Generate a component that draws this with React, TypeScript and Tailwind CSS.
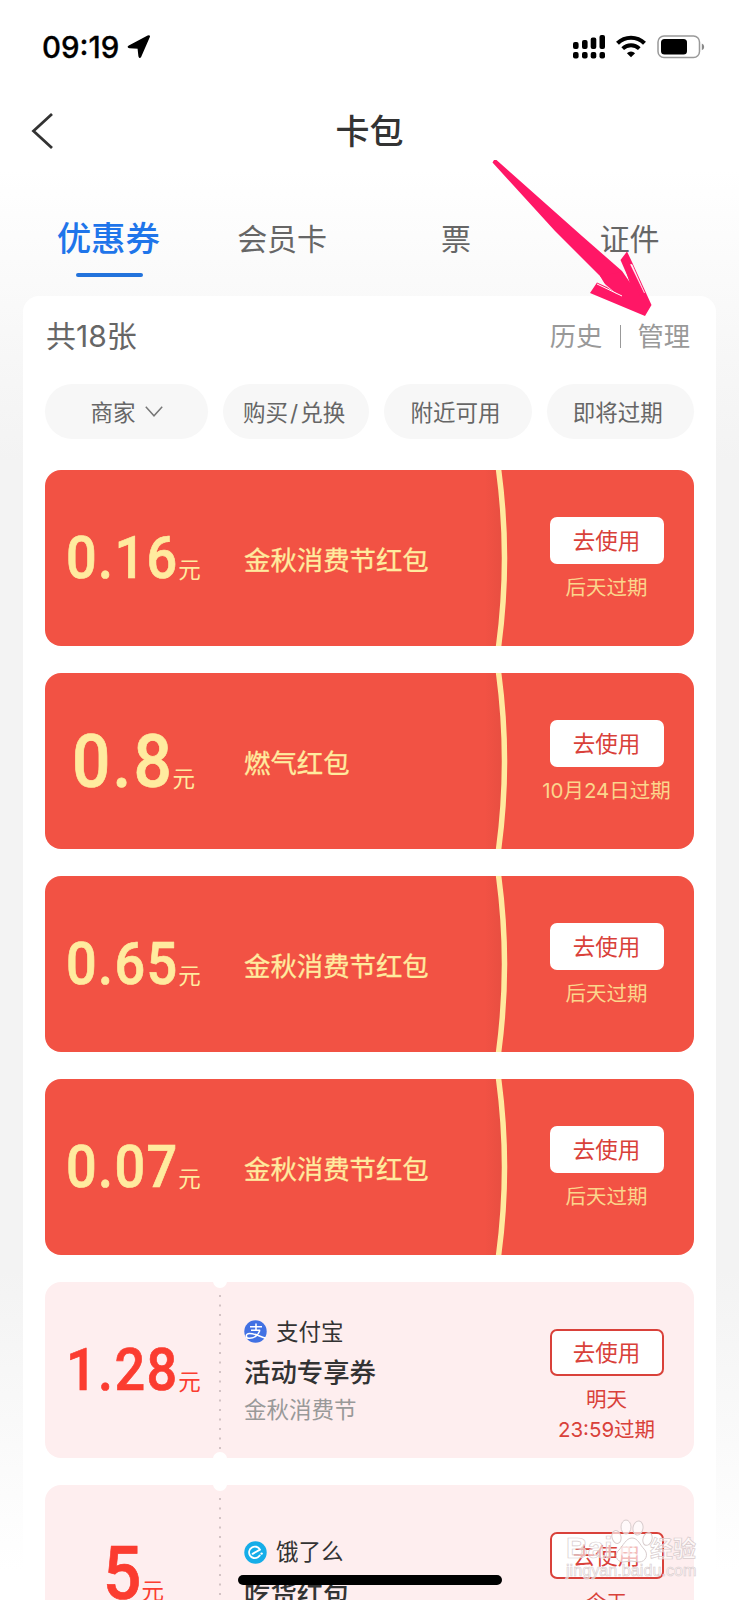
import clsx from 'clsx';

interface Coupon {
  id: number;
  amount: string;
  title: string;
  expiry: string[];
  variant: 'red' | 'pink';
  shop?: string;
  logo?: 'alipay' | 'eleme';
  note?: string;
}

const tabs = ['优惠券', '会员卡', '票', '证件'];

const coupons: Coupon[] = [
  { id: 1, amount: '0.16', title: '金秋消费节红包', expiry: ['后天过期'], variant: 'red' },
  { id: 2, amount: '0.8', title: '燃气红包', expiry: ['10月24日过期'], variant: 'red' },
  { id: 3, amount: '0.65', title: '金秋消费节红包', expiry: ['后天过期'], variant: 'red' },
  { id: 4, amount: '0.07', title: '金秋消费节红包', expiry: ['后天过期'], variant: 'red' },
  {
    id: 5,
    amount: '1.28',
    title: '活动专享券',
    expiry: ['明天', '23:59过期'],
    variant: 'pink',
    shop: '支付宝',
    logo: 'alipay',
    note: '金秋消费节',
  },
  {
    id: 6,
    amount: '5',
    title: '吃货红包',
    expiry: ['今天', '23:59过期'],
    variant: 'pink',
    shop: '饿了么',
    logo: 'eleme',
  },
];

// Longer amounts get a smaller size so they stay inside the left column
const amountClass = (amount: string) => {
  if (amount.length > 3) return 'text-[60px] tracking-[1.5px] -mr-[13px]';
  if (amount.length > 1) return 'text-[75px] tracking-[2.5px] -mr-[13px]';
  return 'text-[75px] -mr-[4px]';
};

const StatusBar = () => (
  <div className="flex h-[94px] items-center justify-between pl-[42px] pr-[34px]">
    <div className="flex items-center gap-[8px]">
      <span className="pt-[2px] font-['Inter'] text-[29.5px] leading-none font-medium text-black [-webkit-text-stroke:0.3px_#000]">
        09:19
      </span>
      <svg width="24" height="24" viewBox="0 0 24 24">
        <path
          d="M22 2 13.500 21.500q-1 1.500-1.300-.3L11.300 13 2.500 12.500q-2-.4-.3-1.400L21 1.200q1.800-.6 1 .8Z"
          stroke="#000"
          strokeWidth="1.600"
          strokeLinejoin="round"
        />
      </svg>
    </div>
    <div className="flex items-center">
      <svg width="32" height="24" viewBox="0 0 32 24">
        <rect x="0" y="7" width="5.600" height="7" rx="2" />
        <rect x="9" y="5" width="5.600" height="9" rx="2" />
        <rect x="17.700" y="2.500" width="5.600" height="11.500" rx="2" />
        <rect x="26.500" y="0" width="5.500" height="14" rx="2" />
        <rect x="0" y="17" width="5.600" height="6.500" rx="2" />
        <rect x="9" y="17" width="5.600" height="6.500" rx="2" />
        <rect x="17.700" y="17" width="5.600" height="6.500" rx="2" />
        <rect x="26.500" y="17" width="5.500" height="6.500" rx="2" />
      </svg>
      <svg className="ml-[11px]" width="30" height="24" viewBox="0 0 30 24">
        <path d="M1.500 8.200a19.500 19.500 0 0 1 27 0" fill="none" stroke="#000" strokeWidth="4.200" />
        <path d="M6.700 13.600a12 12 0 0 1 16.600 0" fill="none" stroke="#000" strokeWidth="3.800" />
        <path d="M15 22.300 10.900 18.200a6 6 0 0 1 8.200 0Z" />
      </svg>
      <svg className="ml-[11px]" width="48" height="24" viewBox="0 0 48 24">
        <rect x="1" y="1" width="41.500" height="21.500" rx="6" fill="none" stroke="#999" strokeWidth="1.500" />
        <rect x="4" y="4" width="26" height="15.500" rx="3.500" />
        <path d="M44.800 8.500q2.400 1 2.400 3.400t-2.400 3.400Z" fill="#888" />
      </svg>
    </div>
  </div>
);

const NavBar = () => (
  <div className="relative flex h-[74px] items-center justify-center">
    <svg className="absolute top-[18px] left-[30px]" width="24" height="38" viewBox="0 0 24 38">
      <path d="M22 2 3.500 19 22 36" fill="none" stroke="#333" strokeWidth="2.800" />
    </svg>
    <h1 className="pt-[1px] text-[34px] leading-none font-medium text-[#333]">卡包</h1>
  </div>
);

const Tabs = () => (
  <div className="flex h-[128px] px-[22px] pt-[51px]">
    {tabs.map((tab, i) => (
      <div key={tab} className="flex flex-1 flex-col items-center">
        <span
          className={clsx(
            'flex h-[40px] items-center leading-none',
            i === 0 ? 'pr-px text-[34.5px] font-medium text-[#1f75ea]' : 'pr-px text-[30px] text-[#666]'
          )}
        >
          {tab}
        </span>
        {i === 0 && <span className="mt-[14px] ml-[2px] h-[4px] w-[67px] rounded-full bg-[#2373dc]" />}
      </div>
    ))}
  </div>
);

const Filters = () => (
  <div className="flex h-[55px] gap-[15px] text-[22.5px] leading-none text-[#666]">
    <div className="flex w-[163px] items-center justify-center rounded-full bg-[#f7f7f7]">
      <span className="pt-[3px]">商家</span>
      <svg className="ml-[9px]" width="18" height="11" viewBox="0 0 18 11">
        <path d="m.800.800 8.200 9 8.200-9" fill="none" stroke="#777" strokeWidth="1.500" />
      </svg>
    </div>
    <div className="flex flex-1 items-center justify-center rounded-full bg-[#f7f7f7] pt-[3px] pr-[4px]">
      购买<span className="mx-[2px]">/</span>兑换
    </div>
    <div className="flex flex-1 items-center justify-center rounded-full bg-[#f7f7f7] pt-[3px] pr-[5px]">附近可用</div>
    <div className="flex flex-1 items-center justify-center rounded-full bg-[#f7f7f7] pt-[3px] pr-[5px]">即将过期</div>
  </div>
);

const ShopLogo = ({ logo }: { logo?: 'alipay' | 'eleme' }) => {
  if (logo === 'alipay') {
    return (
      <svg width="23" height="23" viewBox="0 0 23 23">
        <circle cx="11.500" cy="11.500" r="11.200" fill="#4271e3" />
        <g fill="none" stroke="#fff" strokeWidth="1.600">
          <path d="M6 6.800h12M12 3.500v6.500M7 10.200h9.200" />
          <path d="M15.800 10.400c-1.500 4.500-5.500 7.900-10.300 7.900-4.300 0-4.300-4.800 0-4.800 5 0 9.500 2.500 16.500 4.700" />
        </g>
      </svg>
    );
  }
  return (
    <svg width="23" height="23" viewBox="0 0 23 23">
      <circle cx="11.500" cy="11.500" r="11.200" fill="#16ade8" />
      <path
        d="M8.600 12.800 16 8.600C14.300 5.600 10.600 4.800 7.900 6.500c-2.800 1.800-3.500 5.300-1.900 8 1.700 2.700 5.200 3.400 7.900 1.700.8-.5 1.300-1 1.800-1.700"
        fill="none"
        stroke="#fff"
        strokeWidth="1.900"
        strokeLinecap="round"
        strokeLinejoin="round"
      />
      <circle cx="17.600" cy="12.600" r="1.200" fill="#fff" />
    </svg>
  );
};

const CouponCard = ({ coupon }: { coupon: Coupon }) => {
  const isRed = coupon.variant === 'red';

  return (
    <div
      className={clsx(
        'relative flex h-[176px] shrink-0 overflow-hidden rounded-[16px]',
        isRed ? 'bg-[#f25244]' : 'bg-[#feeeef]'
      )}
    >
      {isRed ? (
        <svg className="absolute top-0 left-[430px]" width="40" height="176" viewBox="0 0 40 176">
          <defs>
            <linearGradient id={`fold-${coupon.id}`}>
              <stop offset="0" stopColor="#b03a30" stopOpacity="0" />
              <stop offset="1" stopColor="#b03a30" stopOpacity="0.18" />
            </linearGradient>
          </defs>
          <path d="M10 0h14q12 88 0 176H10Z" fill={`url(#fold-${coupon.id})`} />
          <path d="M23.500-1q12 89 0 178" fill="none" stroke="#ffe99f" strokeWidth="5.500" />
        </svg>
      ) : (
        <>
          <span className="absolute -top-[8px] left-[168px] size-[14px] rounded-full bg-white" />
          <svg className="absolute top-[13px] left-[174px]" width="2" height="156" viewBox="0 0 2 156">
            <path d="M1 0v156" stroke="#d3c3c5" strokeWidth="2" strokeDasharray="2 7.500" />
          </svg>
          <span className="absolute -bottom-[8px] left-[168px] size-[14px] rounded-full bg-white" />
        </>
      )}

      <div
        className={clsx(
          'flex w-[177px] items-center justify-center',
          isRed ? 'text-[#ffeb9f]' : 'text-[#fb3c30]'
        )}
      >
        <div className="flex items-baseline">
          <span
            className={clsx(
              "origin-left scale-x-90 font-['Roboto'] leading-none font-medium [-webkit-text-stroke:0.7px_currentColor]",
              amountClass(coupon.amount)
            )}
          >
            {coupon.amount}
          </span>
          <span className="text-[22.5px] leading-none">元</span>
        </div>
      </div>

      <div className="flex flex-1 flex-col justify-center pl-[22px]">
        {coupon.shop && (
          <div className={clsx('flex h-[38px] items-center', !coupon.note && 'mb-[3px]')}>
            <ShopLogo logo={coupon.logo} />
            <span className="ml-[9px] pt-px text-[22.5px] leading-none text-[#333]">{coupon.shop}</span>
          </div>
        )}
        <div
          className={clsx(
            'flex h-[39px] items-center pt-[4px] text-[26.4px] leading-none',
            isRed ? 'text-[#ffeb9f] [-webkit-text-stroke:0.3px_currentColor]' : 'font-medium text-[#333]'
          )}
        >
          {coupon.title}
        </div>
        {coupon.note && (
          <div className="flex h-[38px] items-center pt-[3px] text-[22.5px] leading-none text-[#999]">{coupon.note}</div>
        )}
      </div>

      <div className="flex w-[175px] flex-col items-center pt-[47px]">
        <button
          className={clsx(
            'h-[47px] w-[114px] rounded-[7px] bg-white pt-[1px] text-[22.500px] leading-none text-[#d9413a]',
            !isRed && 'border-2 border-[#d9413a]'
          )}
        >
          去使用
        </button>
        <div
          className={clsx(
            'mt-[9px] text-center text-[20.500px] leading-[30px]',
            isRed ? 'text-[#fbd58c]' : 'text-[#d9413a]'
          )}
        >
          {coupon.expiry.map((line) => (
            <div key={line}>{line}</div>
          ))}
        </div>
      </div>
    </div>
  );
};

// Hand-drawn pointer towards the manage link
const Pointer = () => (
  <svg className="absolute top-[155px] left-[488px]" width="170" height="165" viewBox="488 155 170 165">
    <path
      d="M492.500 162.500 494 160 496.500 160 582 236 622 271 631 284 620.500 260 627 251.500 632 262 651.500 305 645 316 590 293 597 282.500 620 293 602 278 555 231Z"
      fill="#ff1766"
    />
    <path d="M622 258 640 296 612 296 600 276 622 272 630 284Z" fill="#ff1766" />
    <path d="M630.500 264.500 632 264.500 644.500 293Z" fill="#fff" stroke="#fff" strokeWidth="0.500" />
    <path d="M597 284 622 296" stroke="#fff" strokeWidth="1" fill="none" />
    <path d="M602 283.500 618 295 600 280Z" fill="#fafafa" />
  </svg>
);

const Watermark = () => (
  <div className="absolute top-[1519px] left-[566px] h-[66px] w-[140px] text-white/60">
    <svg className="absolute top-0 left-[44px]" width="44" height="48" viewBox="0 0 44 48">
      <g fill="#fff" fillOpacity="0.65" stroke="#d8cccd" strokeWidth="1">
        <ellipse cx="16" cy="8" rx="5" ry="7" />
        <ellipse cx="28" cy="9" rx="5" ry="7" transform="rotate(10 28 9)" />
        <ellipse cx="6.500" cy="18" rx="4.500" ry="6.500" transform="rotate(-15 6.500 18)" />
        <ellipse cx="37.500" cy="20" rx="4.500" ry="6.500" transform="rotate(18 37.500 20)" />
        <path d="M22 19c6 0 8 7 12 11 5 5 2 13-5 13-3 0-5-1-8-1s-5 1-8 1c-7 0-9-8-4-12 4-4 7-12 13-12Z" />
      </g>
    </svg>
    <span className="absolute top-[14px] left-0 font-['Liberation_Sans'] text-[30px] leading-[30px] font-bold [-webkit-text-stroke:0.7px_#d8cccd]">
      Bai
    </span>
    <span className="absolute top-[20px] left-[54px] font-['Liberation_Sans'] text-[18px] leading-[22px] font-bold">
      du
    </span>
    <span className="absolute top-[17px] left-[84px] text-[23px] leading-[26px] font-bold [-webkit-text-stroke:0.7px_#d8cccd]">
      经验
    </span>
    <span className="absolute top-[41px] left-0 font-['Liberation_Sans'] text-[16.200px] leading-[20px] [-webkit-text-stroke:0.6px_#d8cccd]">
      jingyan.baidu.com
    </span>
  </div>
);

export default function App() {
  return (
    <div className="relative h-[1600px] w-[739px] overflow-hidden bg-[linear-gradient(#fff_0px,#fff_170px,#fafafa_280px,#f3f3f3_460px,#f3f3f3_1270px,#fff_1570px)] font-['Inter','Noto_Sans_CJK_SC',sans-serif]">
      <StatusBar />
      <NavBar />
      <Tabs />

      <div className="mx-[23px] h-[1400px] rounded-t-[16px] bg-white px-[22px]">
        <div className="flex h-[88px] items-center justify-between pr-[4px] pb-[8px]">
          <span className="pl-px text-[30px] leading-none text-[#666]">共18张</span>
          <div className="flex items-center pt-[2px] text-[26.300px] leading-none text-[#999]">
            <span>历史</span>
            <span className="mr-[16px] ml-[18px] h-[23px] w-px bg-[#999]" />
            <span>管理</span>
          </div>
        </div>

        <Filters />

        <div className="mt-[31px] flex flex-col gap-[27px]">
          {coupons.map((coupon) => (
            <CouponCard key={coupon.id} coupon={coupon} />
          ))}
        </div>
      </div>

      <Pointer />
      <Watermark />
      <div className="absolute top-[1575px] left-[238px] h-[10px] w-[264px] rounded-full bg-black" />
    </div>
  );
}
